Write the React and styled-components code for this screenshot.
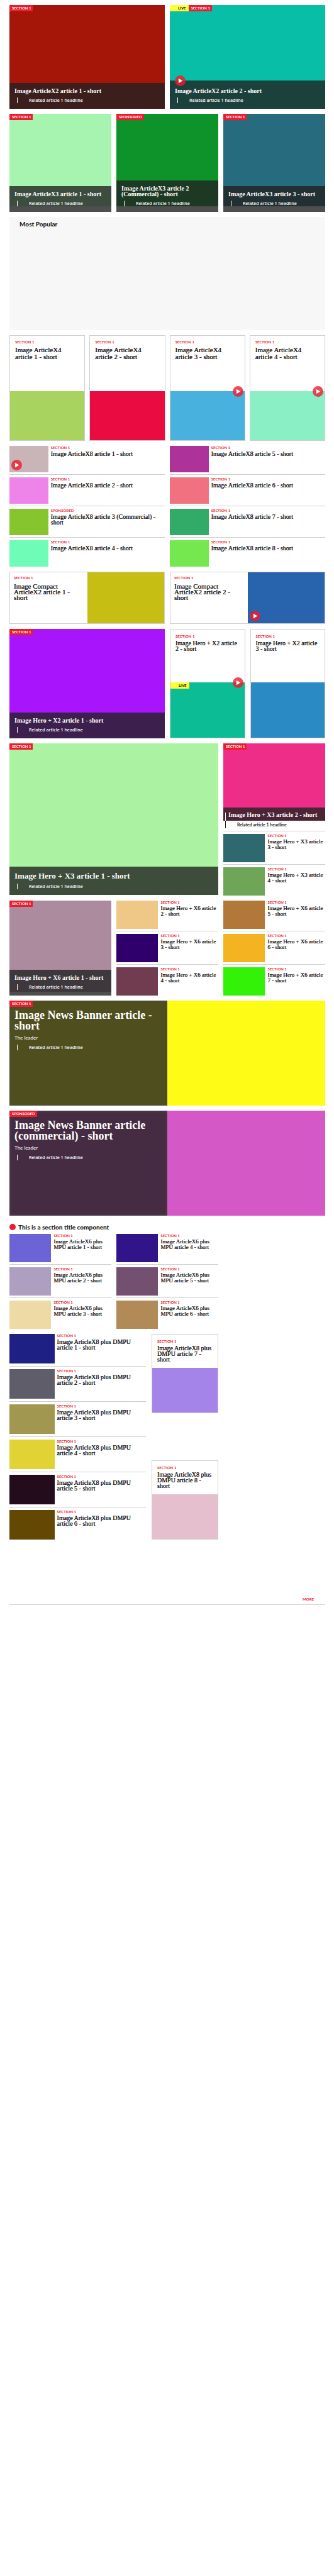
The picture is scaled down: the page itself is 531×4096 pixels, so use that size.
import React from 'react';
import styled, { createGlobalStyle, css } from 'styled-components';

const red = '#ed1b2e';
const ink = '#222222';
const rule = '#cfcfcf';
const veil = 'rgba(34, 34, 34, 0.8)';
const sans = '"Lato", "Open Sans", sans-serif';
const serif = '"Liberation Serif", "Times New Roman", serif';

const GlobalStyle = createGlobalStyle`
  *, *::before, *::after { box-sizing: border-box; }
  body { margin: 0; background: #fff; color: ${ink}; font-family: ${sans}; }
  a { color: inherit; text-decoration: none; }
  h2, h3, p { margin: 0; }
`;

const Page = styled.main`
  display: flex;
  flex-direction: column;
  gap: 8px;
  padding: 8px 14px 8px 15px;
`;

const Columns = styled.section`
  display: grid;
  grid-template-columns: repeat(${(p) => p.$count}, minmax(0, 1fr));
  gap: ${(p) => p.$gap || 8}px;
`;

const TwoThirds = styled.div`
  grid-column: span 2;
`;

/* Labels */

const TagRow = styled.div`
  position: absolute;
  top: 0;
  left: 0;
  display: flex;
`;

const Tag = styled.span`
  padding: 0 3px 0 4px;
  background: ${red};
  color: #fff;
  font-size: 6px;
  font-weight: 700;
  line-height: 10px;
  white-space: nowrap;
`;

const LiveTag = styled(Tag)`
  padding: 0 4px 0 13px;
  background: #fffd38;
  color: #000;
`;

const Label = styled.p`
  color: ${red};
  font-size: 6px;
  font-weight: 700;
  line-height: 6px;
`;

const PlayMark = styled.svg`
  position: absolute;
  z-index: 1;
  width: 17px;
  height: 17px;
  ${(p) =>
    ({
      overlay: css`top: -8px; left: 8px;`,
      edge: css`top: -8px; right: 2px;`,
      corner: css`bottom: 3px; left: 3px;`,
    })[p.$place]}
`;

const Play = ({ place }) => (
  <PlayMark $place={place} viewBox="0 0 32 32" aria-hidden="true">
    <circle cx="16" cy="16" r="16" fill={red} fillOpacity="0.8" />
    <path d="M11 9v14l12-7z" fill="#fff" />
  </PlayMark>
);

/* Picture with its headline laid over the lower edge */

const Cover = styled.article`
  position: relative;
  aspect-ratio: ${(p) => p.$ratio};
`;

const Picture = styled.div`
  position: relative;
  height: ${(p) => p.$fill || 100}%;
  background: ${(p) => p.$color};
`;

const Overlay = styled.div`
  position: absolute;
  right: 0;
  bottom: 0;
  left: 0;
  padding: ${(p) => (p.$video ? 12 : 8)}px 8px 9px;
  background: ${veil};
  color: #fff;
`;

const CoverTitle = styled.h3`
  font-family: ${serif};
  font-size: ${(p) => (p.$large ? 13 : 10)}px;
  font-weight: 700;
  line-height: ${(p) => (p.$large ? 13 : 9)}px;
`;

const Related = styled.p`
  margin: 6px 0 0 4px;
  padding-left: 18px;
  border-left: 1px solid #fff;
  font-family: "Open Sans", ${sans};
  font-size: 7px;
  font-weight: 600;
  line-height: 9px;
`;

const CoverCard = ({ title, color, tag = 'SECTION 1', live, video, ratio, fill, large }) => (
  <Cover $ratio={ratio}>
    <Picture $color={color} $fill={fill} />
    <TagRow>
      {live && <LiveTag>LIVE</LiveTag>}
      <Tag>{tag}</Tag>
    </TagRow>
    <Overlay $video={video}>
      {video && <Play place="overlay" />}
      <CoverTitle $large={large}><a href="#article">{title}</a></CoverTitle>
      <Related><a href="#related">Related article 1 headline</a></Related>
    </Overlay>
  </Cover>
);

/* Bordered card: text above, picture below */

const Card = styled.article`
  display: flex;
  flex-direction: column;
  border: 1px solid ${rule};
  aspect-ratio: ${(p) => p.$ratio};
`;

const CardText = styled.div`
  flex: 0 0 ${(p) => p.$share}%;
  padding: ${(p) => (p.$big ? 7 : 8)}px 8px 0;
`;

const CardPicture = styled.div`
  position: relative;
  flex: 1;
  background: ${(p) => p.$color};
`;

const Title = styled.h3`
  margin-top: ${(p) => p.$space || 2}px;
  font-family: ${serif};
  font-size: ${(p) => p.$size}px;
  font-weight: 400;
  line-height: ${(p) => p.$line || 9}px;
  text-shadow: 0 0 0 currentColor;
`;

const TextCard = ({ title, color, ratio, share, big, live, video }) => (
  <Card $ratio={ratio}>
    <CardText $share={share} $big={big}>
      <Label>SECTION 1</Label>
      <Title $size={big ? 11 : 10} $line={big ? 11 : 9} $space={big ? 4 : 3}>
        <a href="#article">{title}</a>
      </Title>
    </CardText>
    <CardPicture $color={color}>
      {live && <TagRow><LiveTag>LIVE</LiveTag></TagRow>}
      {video && <Play place="edge" />}
    </CardPicture>
  </Card>
);

/* Row with a thumbnail at the left */

const List = styled.div`
  display: flex;
  flex-direction: column;
`;

const Item = styled.article`
  display: flex;
  gap: 4px;

  &:not(:first-child) {
    margin-top: ${(p) => p.$gap || 3}px;
    padding-top: 4px;
    border-top: 1px solid ${rule};
  }
`;

const Thumb = styled.div`
  position: relative;
  flex: 0 0 ${(p) => p.$width}%;
  min-height: ${(p) => p.$height}px;
  background: ${(p) => p.$color};
`;

const ItemList = ({ items, width, height, size, gap }) => (
  <List>
    {items.map(({ title, color, label = 'SECTION 1', video }) => (
      <Item key={title} $gap={gap}>
        <Thumb $color={color} $width={width} $height={height}>
          {video && <Play place="corner" />}
        </Thumb>
        <div>
          <Label>{label}</Label>
          <Title $size={size}><a href="#article">{title}</a></Title>
        </div>
      </Item>
    ))}
  </List>
);

/* Compact card: text at the left, picture at the right */

const Compact = styled.article`
  display: grid;
  grid-template-columns: 1fr 1fr;
  min-height: 83px;
  border: 1px solid ${rule};
`;

const CompactText = styled.div`
  padding: 6px;
`;

const CompactCard = ({ title, color, video }) => (
  <Compact>
    <CompactText>
      <Label>SECTION 1</Label>
      <Title $size={11} $space={6}><a href="#article">{title}</a></Title>
    </CompactText>
    <CardPicture $color={color}>{video && <Play place="corner" />}</CardPicture>
  </Compact>
);

/* Lead story of the side column */

const LeadPicture = styled(Picture)`
  height: auto;
  aspect-ratio: 162 / 123;
`;

const LeadOverlay = styled(Overlay)`
  padding: 7px 8px 5px;

  &::before {
    content: '';
    position: absolute;
    top: 8px;
    bottom: 0;
    left: 3px;
    border-left: 1px solid #fff;
  }
`;

const LeadRelated = styled.p`
  margin: 0 0 4px 3px;
  padding-left: 18px;
  border-left: 1px solid ${ink};
  font-size: 7px;
  font-weight: 700;
  line-height: 12px;
`;

const Ruled = styled.div`
  padding-top: 4px;
  border-top: 1px solid ${rule};
`;

/* Most Popular */

const Popular = styled.section`
  min-height: 180px;
  padding: 5px 16px;
  background: #f7f7f7;
`;

const Heading = styled.h2`
  font-size: 10px;
  font-weight: 900;
  line-height: 12px;
`;

/* News banner */

const Banner = styled.article`
  position: relative;
  display: grid;
  grid-template-columns: 1fr 1fr;
  min-height: 167px;
  background: ${(p) => p.$color};
`;

const BannerText = styled.div`
  padding: 15px 8px;
  background: ${veil};
  box-shadow: inset 0 0 4px #4e4e4e;
  color: #fff;
`;

const BannerTitle = styled.h2`
  font-family: ${serif};
  font-size: 18px;
  font-weight: 700;
  line-height: 17px;
`;

const Leader = styled.p`
  margin-top: 5px;
  font-size: 8px;
  line-height: 10px;
`;

const NewsBanner = ({ title, color, tag }) => (
  <Banner $color={color}>
    <BannerText>
      <BannerTitle><a href="#article">{title}</a></BannerTitle>
      <Leader>The leader</Leader>
      <Related><a href="#related">Related article 1 headline</a></Related>
    </BannerText>
    <TagRow><Tag>{tag}</Tag></TagRow>
  </Banner>
);

/* Titled section with an empty advert column */

const Titled = styled.section`
  display: flex;
  flex-direction: column;
`;

const SectionTitle = styled.header`
  display: flex;
  align-items: center;
  gap: 4px;
  height: 21px;
`;

const Dot = styled.span`
  width: 10px;
  height: 10px;
  border-radius: 50%;
  background: ${red};
`;

const SplitColumns = styled(TwoThirds)`
  display: grid;
  grid-template-columns: 217fr 106fr;
  gap: 9px;
`;

const Spread = styled.div`
  display: flex;
  flex-direction: column;
  justify-content: space-between;
`;

const Footer = styled.footer`
  display: flex;
  justify-content: flex-end;
  padding: 83px 18px 4px;
  border-bottom: 1px solid ${rule};
  color: ${red};
  font-size: 6px;
  font-weight: 900;
  line-height: 8px;
`;

const named = (prefix, start, colors, extra = {}) =>
  colors.map((color, i) => ({ title: `${prefix} article ${start + i} - short`, color, ...extra[start + i] }));

const x8Left = named('Image ArticleX8', 1, ['#c9b4b7', '#ee84ea', '#86c52e', '#6ffcb6'], {
  1: { video: true },
  3: { title: 'Image ArticleX8 article 3 (Commercial) - short', label: 'SPONSORED' },
});
const x8Right = named('Image ArticleX8', 5, ['#ad339b', '#f17180', '#32ab68', '#74e84e']);
const heroX3 = named('Image Hero + X3', 3, ['#2e6970', '#6fa556']);
const heroX6Left = named('Image Hero + X6', 2, ['#efc888', '#2f006c', '#713c50']);
const heroX6Right = named('Image Hero + X6', 5, ['#b17839', '#f4b320', '#34f207']);
const mpuLeft = named('Image ArticleX6 plus MPU', 1, ['#6c63d6', '#ae9fc0', '#eedaa5']);
const mpuRight = named('Image ArticleX6 plus MPU', 4, ['#31148a', '#73506f', '#b28a58']);
const dmpu = named('Image ArticleX8 plus DMPU', 1, ['#1f2083', '#605d6a', '#a19750', '#e1d335', '#230d1c', '#634804']);

export default function App() {
  return (
    <>
      <GlobalStyle />
      <Page>
        <Columns $count={2}>
          <CoverCard title="Image ArticleX2 article 1 - short" color="#a51508" ratio="247 / 165" />
          <CoverCard title="Image ArticleX2 article 2 - short" color="#08bea6" ratio="247 / 165" live video />
        </Columns>

        <Columns $count={3}>
          <CoverCard title="Image ArticleX3 article 1 - short" color="#a7f3b0" ratio="162 / 156" fill={94} />
          <CoverCard title="Image ArticleX3 article 2 (Commercial) - short" color="#0e932b" ratio="162 / 156" fill={94} tag="SPONSORED" />
          <CoverCard title="Image ArticleX3 article 3 - short" color="#276b7f" ratio="162 / 156" fill={94} />
        </Columns>

        <Popular>
          <Heading>Most Popular</Heading>
        </Popular>

        <Columns $count={4} $gap={7}>
          <TextCard title="Image ArticleX4 article 1 - short" color="#a8d35e" ratio="63 / 88" share={53} big />
          <TextCard title="Image ArticleX4 article 2 - short" color="#ea0c40" ratio="63 / 88" share={53} big />
          <TextCard title="Image ArticleX4 article 3 - short" color="#49b1dd" ratio="63 / 88" share={53} big video />
          <TextCard title="Image ArticleX4 article 4 - short" color="#8aefc5" ratio="63 / 88" share={53} big video />
        </Columns>

        <Columns $count={2}>
          <ItemList items={x8Left} width={25} height={42} size={10} />
          <ItemList items={x8Right} width={25} height={42} size={10} />
        </Columns>

        <Columns $count={2}>
          <CompactCard title="Image Compact ArticleX2 article 1 - short" color="#c7be14" />
          <CompactCard title="Image Compact ArticleX2 article 2 - short" color="#2864ad" video />
        </Columns>

        <Columns $count={2}>
          <CoverCard title="Image Hero + X2 article 1 - short" color="#a814fb" ratio="247 / 174" />
          <Columns $count={2}>
            <TextCard title="Image Hero + X2 article 2 - short" color="#0cbc94" share={49} live video />
            <TextCard title="Image Hero + X2 article 3 - short" color="#2a8ac4" share={49} />
          </Columns>
        </Columns>

        <Columns $count={3}>
          <TwoThirds>
            <CoverCard title="Image Hero + X3 article 1 - short" color="#abf3a2" ratio="332 / 241" large />
          </TwoThirds>
          <div>
            <LeadPicture as="article" $color="#ee2d88">
              <TagRow><Tag>SECTION 1</Tag></TagRow>
              <LeadOverlay>
                <CoverTitle><a href="#article">Image Hero + X3 article 2 - short</a></CoverTitle>
              </LeadOverlay>
            </LeadPicture>
            <LeadRelated><a href="#related">Related article 1 headline</a></LeadRelated>
            <Ruled>
              <ItemList items={heroX3} width={41} height={45} size={9} />
            </Ruled>
          </div>
        </Columns>

        <Columns $count={3}>
          <CoverCard title="Image Hero + X6 article 1 - short" color="#ad8b9f" ratio="162 / 151" fill={96} />
          <ItemList items={heroX6Left} width={41} height={45} size={9} />
          <ItemList items={heroX6Right} width={41} height={45} size={9} />
        </Columns>

        <NewsBanner title="Image News Banner article - short" color="#fefc17" tag="SECTION 1" />
        <NewsBanner title="Image News Banner article (commercial) - short" color="#d558c7" tag="SPONSORED" />

        <Titled>
          <SectionTitle>
            <Dot />
            <Heading>This is a section title component</Heading>
          </SectionTitle>
          <Columns $count={3}>
            <ItemList items={mpuLeft} width={41} height={45} size={9} />
            <ItemList items={mpuRight} width={41} height={45} size={9} />
          </Columns>
        </Titled>

        <Columns $count={3}>
          <SplitColumns>
            <ItemList items={dmpu} width={33} height={47} size={10} gap={4} />
            <Spread>
              <TextCard title="Image ArticleX8 plus DMPU article 7 - short" color="#a484e9" ratio="106 / 126" share={43} />
              <TextCard title="Image ArticleX8 plus DMPU article 8 - short" color="#e5bfcd" ratio="106 / 126" share={43} />
            </Spread>
          </SplitColumns>
        </Columns>

        <Footer>
          <a href="#more">MORE</a>
        </Footer>
      </Page>
    </>
  );
}
